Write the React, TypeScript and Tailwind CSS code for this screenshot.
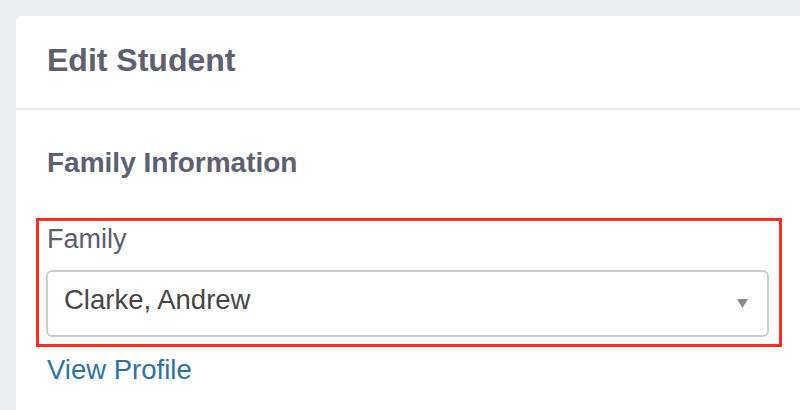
export default function App() {
  return (
    <div
      className="h-[410px] w-[800px] overflow-hidden bg-[#ecedf1] pl-4 pt-4"
      style={{ fontFamily: '"Liberation Sans", Arial, sans-serif' }}
    >
      <div className="h-[420px] w-[800px] rounded-tl-[5px] bg-white">
        <header className="h-[94px] border-b-2 border-[#ebebeb] px-[31px] pt-[28px]">
          <h1 className="text-[32px] font-bold leading-none text-[#5d6070]">
            Edit Student
          </h1>
        </header>

        <div className="px-[31px] pt-[39px]">
          <h2 className="text-[28px] font-bold leading-none text-[#5d6070]">
            Family Information
          </h2>

          <div className="-ml-[11px] mt-[41px] h-[129px] w-[746px] border-[3px] border-[#ff2d1f] pl-[7px] pt-[5px]">
            <label className="ml-[1px] block text-[27px] leading-none text-[#5a5e6e]">
              Family
            </label>
            <div className="mt-[17px] flex h-[67px] w-[723px] items-start justify-between rounded-[6px] border-2 border-[#cccccc] bg-white pl-[16px] pr-[19px] pt-[14px]">
              <span className="text-[27.5px] leading-none text-[#464646]">
                Clarke, Andrew
              </span>
              <svg
                width="11"
                height="9"
                viewBox="0 0 11 9"
                className="mt-[13px]"
              >
                <path d="M0 0H11L5.5 9Z" fill="#888888" />
              </svg>
            </div>
          </div>

          <a
            href="#"
            className="mt-[9px] block text-[27.5px] leading-none text-[#2c72a6]"
          >
            View Profile
          </a>
        </div>
      </div>
    </div>
  );
}
